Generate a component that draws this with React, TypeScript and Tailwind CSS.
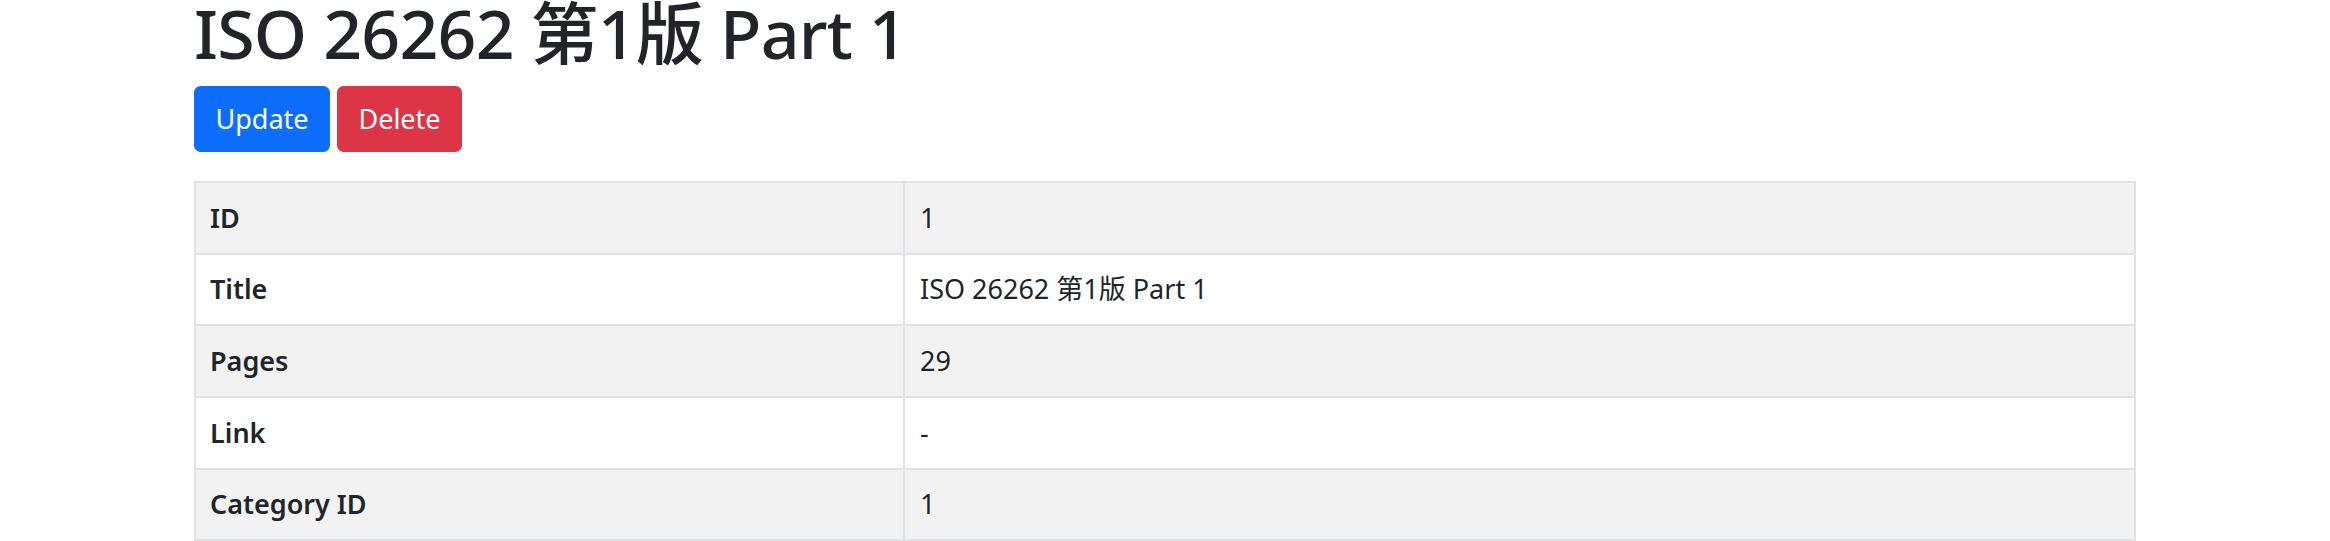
const rows: { label: string; value: string; h: string }[] = [
  { label: "ID", value: "1", h: "h-[72px]" },
  { label: "Title", value: "ISO 26262 第1版 Part 1", h: "h-[71px]" },
  { label: "Pages", value: "29", h: "h-[72px]" },
  { label: "Link", value: "-", h: "h-[72px]" },
  { label: "Category ID", value: "1", h: "h-[71px]" },
];

export default function App() {
  return (
    <div className="flex h-[541px] flex-col overflow-hidden bg-white pl-[194px] font-['Noto_Sans','Noto_Sans_CJK_SC',sans-serif] text-[#212529]">
      <h1 className="mb-[20px] text-[68px] font-medium leading-[66px] tracking-[-0.8px] whitespace-nowrap">
        ISO 26262 第1版 Part 1
      </h1>

      <div className="flex gap-[7px]">
        <button className="flex h-[66px] w-[136px] items-center justify-center rounded-[6.5px] bg-[#0d6efd] text-[27px] leading-[42px] text-white">
          Update
        </button>
        <button className="flex h-[66px] w-[125px] items-center justify-center rounded-[6.5px] bg-[#dc3545] text-[27px] leading-[42px] text-white">
          Delete
        </button>
      </div>

      <div className="mt-[29px] w-[1942px] shrink-0 border-2 border-b-0 border-[#dee2e6]">
        {rows.map((row, i) => (
          <div
            key={row.label}
            className={`flex ${row.h} border-b-2 border-[#dee2e6] ${i % 2 === 0 ? "bg-[#f2f2f2]" : "bg-white"}`}
          >
            <div className="flex w-[709px] items-center border-r-2 border-[#dee2e6] pl-[14px] text-[27px] font-semibold">
              {row.label}
            </div>
            <div className="flex flex-1 items-center pl-[15px] text-[27px]">
              {row.value}
            </div>
          </div>
        ))}
      </div>
    </div>
  );
}
